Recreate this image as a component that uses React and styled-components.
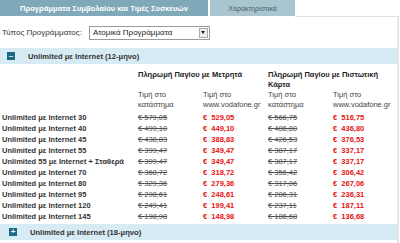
import { Fragment } from 'react';
import styled, { createGlobalStyle } from 'styled-components';

const GlobalStyle = createGlobalStyle`
    body {
        margin: 0;
        background: #fff;
        font-family: "Liberation Sans", Arial, sans-serif;
    }
`;

const Page = styled.div`
    width: 400px;
    height: 243px;
    overflow: hidden;
`;

const TabBar = styled.div`
    display: flex;
    height: 17px;
`;

const Tab = styled.div`
    width: ${({ width }) => width}px;
    height: 16px;
    margin-right: ${({ gap }) => gap || 0}px;
    display: flex;
    align-items: center;
    justify-content: center;
    background: ${({ active }) => (active ? '#7fa8b8' : '#a9c5d0')};
    color: ${({ active }) => (active ? '#fff' : '#47616c')};
    font-size: ${({ active }) => (active ? '7.6px' : '7px')};
    font-weight: ${({ active }) => (active ? 'bold' : 'normal')};
    white-space: nowrap;
`;

const TabFiller = styled.div`
    flex: 1;
    margin-right: 1px;
    border-bottom: 1px solid #e2e2e2;
`;

const Panel = styled.div`
    width: 397px;
    border-right: 2px solid #e6e6e6;
    padding-bottom: 10px;
`;

const FilterRow = styled.div`
    display: flex;
    align-items: center;
    gap: 7px;
    height: 31px;
    padding-left: 2px;
    font-size: 8px;
    color: #333;
`;

const Select = styled.div`
    width: 116px;
    height: 12px;
    border: 1px solid #9a9a9a;
    display: flex;
    align-items: center;
    justify-content: space-between;
    padding-left: 3px;
    font-size: 8px;
    color: #222;
    background: #fff;
`;

const SelectArrow = styled.div`
    width: 7px;
    height: 8px;
    margin-right: 1px;
    border: 1px solid #aaa;
    background: #eee;
    display: flex;
    align-items: center;
    justify-content: center;

    &::after {
        content: '';
        border-left: 2px solid transparent;
        border-right: 2px solid transparent;
        border-top: 3px solid #222;
    }
`;

const SectionBand = styled.div`
    display: flex;
    align-items: center;
    gap: 13px;
    height: 16px;
    padding-left: ${({ open }) => (open ? 7 : 9)}px;
    margin-top: ${({ open }) => (open ? 0 : 2)}px;
    background: #d6ebf3;
    font-size: 7.6px;
    font-weight: bold;
    color: #333;
`;

const ToggleIcon = styled.div`
    width: 8px;
    height: 8px;
    background: #1c6a88;
    display: flex;
    align-items: center;
    justify-content: center;
    color: #fff;
    font-size: 8px;
    line-height: 8px;
    font-weight: bold;
`;

const PriceGrid = styled.div`
    display: grid;
    grid-template-columns: 138px 65px 65px 65px 64px;
    padding-top: 6px;
    font-size: 7.5px;
`;

const GroupHead = styled.div`
    grid-column: ${({ col }) => col} / span 2;
    font-weight: bold;
    color: #222;
    line-height: 9.5px;
    padding-right: 12px;
`;

const SubHead = styled.div`
    grid-column: ${({ col }) => col};
    color: #444;
    line-height: 9.5px;
    padding-top: 1px;
    padding-bottom: 3px;
    white-space: pre-line;
`;

const Cell = styled.div`
    line-height: 11px;
    white-space: nowrap;
`;

const PlanName = styled(Cell)`
    grid-column: 1;
    padding-left: 2px;
    font-weight: bold;
    color: #333;
`;

const OldPrice = styled(Cell)`
    color: #505050;
    text-decoration: line-through;
`;

const WebPrice = styled(Cell)`
    color: #e8110f;
    font-weight: bold;
`;

const plans = [
    ['Unlimited με Internet 30', '579,05', '529,05', '566,75', '516,75'],
    ['Unlimited με Internet 40', '499,10', '449,10', '486,80', '436,80'],
    ['Unlimited με Internet 45', '438,83', '388,83', '426,53', '376,53'],
    ['Unlimited με Internet 55', '399,47', '349,47', '387,17', '337,17'],
    ['Unlimited 55 με Internet + Σταθερά', '399,47', '349,47', '387,17', '337,17'],
    ['Unlimited με Internet 70', '368,72', '318,72', '356,42', '306,42'],
    ['Unlimited με Internet 80', '329,36', '279,36', '317,06', '267,06'],
    ['Unlimited με Internet 95', '298,61', '248,61', '286,31', '236,31'],
    ['Unlimited με Internet 120', '249,41', '199,41', '237,11', '187,11'],
    ['Unlimited με Internet 145', '198,98', '148,98', '186,68', '136,68'],
];

function App() {
    return (
        <Page>
            <GlobalStyle />
            <TabBar>
                <Tab active width={208} gap={2}>
                    Προγράμματα Συμβολαίου και Τιμές Συσκευών
                </Tab>
                <Tab width={85}>Χαρακτηριστικά</Tab>
                <TabFiller />
            </TabBar>
            <Panel>
                <FilterRow>
                    Τύπος Προγράμματος:
                    <Select>
                        Ατομικά Προγράμματα
                        <SelectArrow />
                    </Select>
                </FilterRow>
                <SectionBand open>
                    <ToggleIcon>–</ToggleIcon>
                    Unlimited με Internet (12-μηνο)
                </SectionBand>
                <PriceGrid>
                    <GroupHead col={2}>Πληρωμή Παγίου με Μετρητά</GroupHead>
                    <GroupHead col={4}>Πληρωμή Παγίου με Πιστωτική Κάρτα</GroupHead>
                    <SubHead col={2}>{'Τιμή στο\nκατάστημα'}</SubHead>
                    <SubHead col={3}>{'Τιμή στο\nwww.vodafone.gr'}</SubHead>
                    <SubHead col={4}>{'Τιμή στο\nκατάστημα'}</SubHead>
                    <SubHead col={5}>{'Τιμή στο\nwww.vodafone.gr'}</SubHead>
                    {plans.map(([name, shop, web, shopCard, webCard]) => (
                        <Fragment key={name}>
                            <PlanName>{name}</PlanName>
                            <OldPrice>€ {shop}</OldPrice>
                            <WebPrice>€&nbsp; {web}</WebPrice>
                            <OldPrice>€ {shopCard}</OldPrice>
                            <WebPrice>€&nbsp; {webCard}</WebPrice>
                        </Fragment>
                    ))}
                </PriceGrid>
                <SectionBand>
                    <ToggleIcon>+</ToggleIcon>
                    Unlimited με Internet (18-μηνο)
                </SectionBand>
            </Panel>
        </Page>
    );
}

export default App;
